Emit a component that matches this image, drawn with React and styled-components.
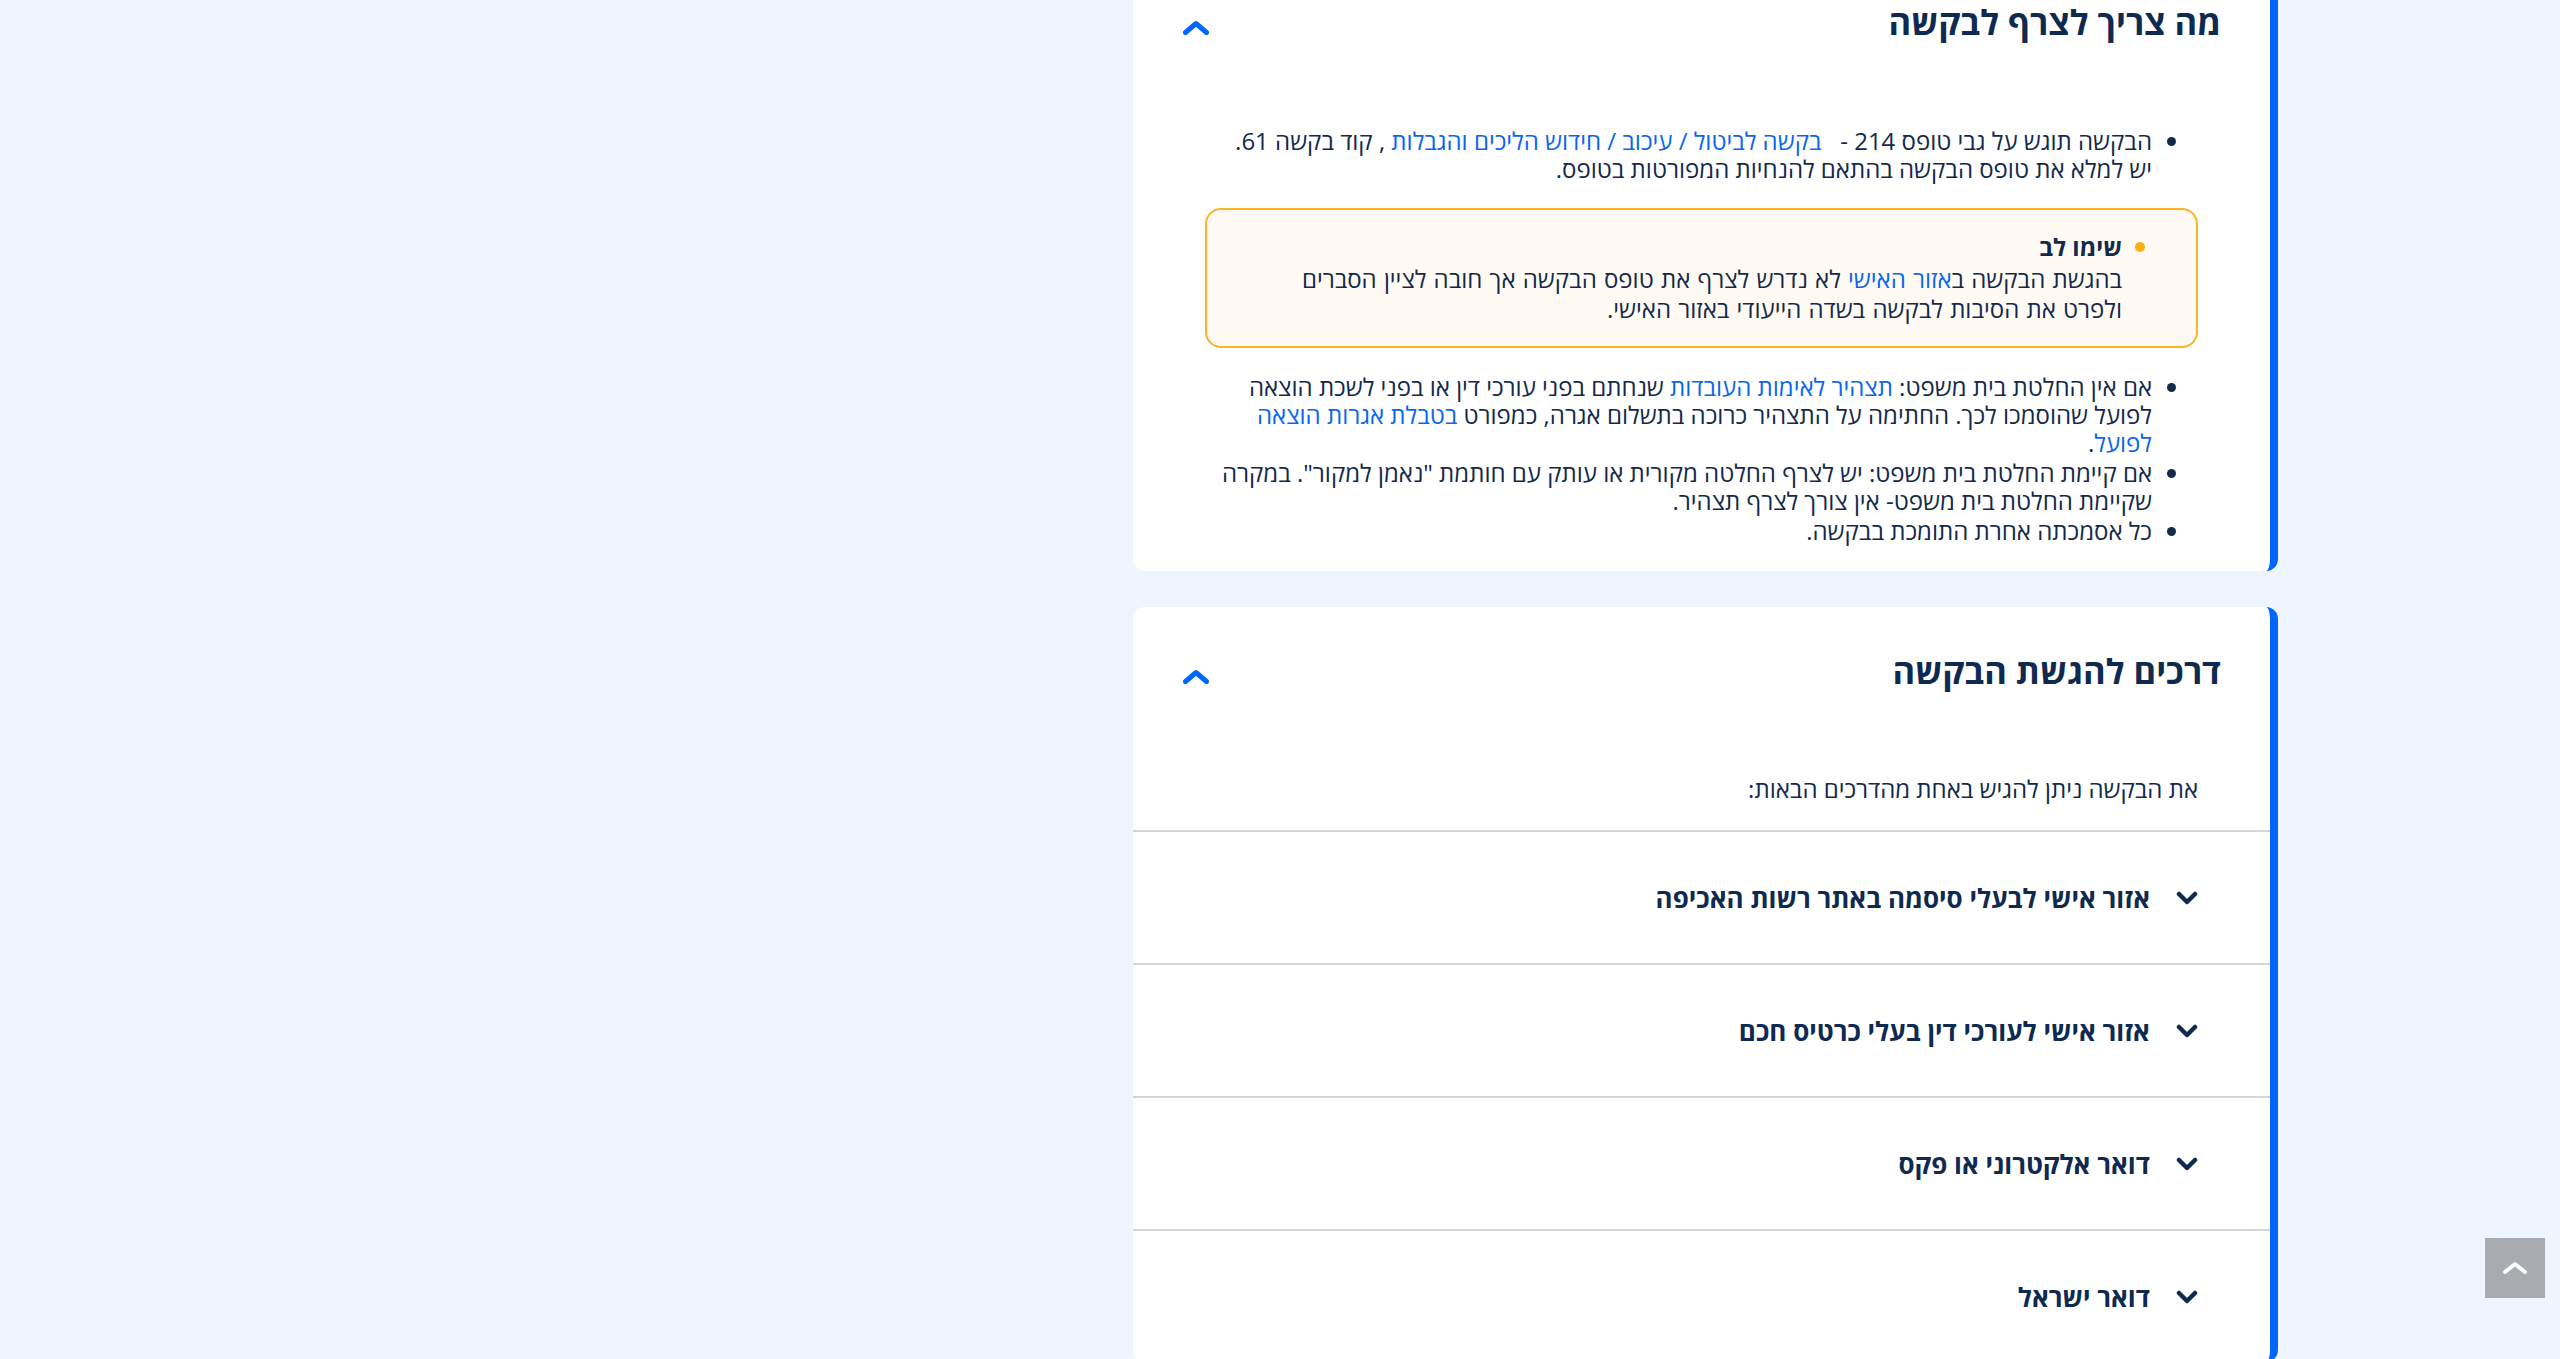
import React from "react";
import styled, { createGlobalStyle } from "styled-components";

const GlobalStyle = createGlobalStyle`
  body {
    margin: 0;
    background: #eef5fe;
    font-family: "Open Sans", "DejaVu Sans", sans-serif;
    color: #13294b;
  }
`;

const Page = styled.main`
  direction: rtl;
  padding: 0 282px 80px 0;
`;

const Column = styled.div`
  width: 1145px;
  margin-top: -42px;
  display: flex;
  flex-direction: column;
  gap: 36px;
`;

const Card = styled.section`
  box-sizing: border-box;
  background: #fff;
  border-right: 8px solid #0066ff;
  border-radius: 12px;
  overflow: hidden;
`;

const Header = styled.div`
  display: flex;
  align-items: center;
  justify-content: space-between;
  padding: 40px 49px;
`;

const Title = styled.h2`
  margin: 0;
  font-size: 34.5px;
  font-weight: 700;
  line-height: 48px;
  color: #0f2a50;
`;

const Toggle = styled.span`
  display: flex;
  margin-top: 12px;
`;

const Body = styled.div`
  padding: ${(p) => (p.$flush ? "40px 0 0" : "41px 72px 24px")};
`;

const List = styled.ul`
  margin: 0;
  padding: 0 46px 0 0;
  font-size: 24px;
  line-height: 28px;

  li {
    margin-bottom: 2px;
  }
`;

const Link = styled.a`
  color: #0a66f0;
  text-decoration: none;
`;

const Note = styled.div`
  margin: 25px 0;
  padding: 22px 51px 22px 70px;
  border: 2px solid #fbb424;
  border-radius: 16px;
  background: #fffbf4;
  font-size: 24px;
  line-height: 30px;
`;

const NoteHead = styled.div`
  display: flex;
  align-items: center;
  gap: 13px;
  margin-bottom: 2px;
  font-weight: 700;

  &::before {
    content: "";
    width: 10px;
    height: 10px;
    border-radius: 50%;
    background: #ffad0d;
  }
`;

const NoteText = styled.p`
  margin: 0 23px 0 0;
  word-spacing: 1px;
`;

const Intro = styled.p`
  margin: 0 0 27px;
  padding: 0 72px;
  font-size: 24px;
  line-height: 28px;
`;

const Row = styled.div`
  height: 131px;
  display: flex;
  align-items: center;
  gap: 26px;
  padding: 0 72px;
  border-top: 2px solid #d6d6d6;
  font-size: 26px;
  font-weight: 700;
  color: #0f2a50;
`;

const ToTop = styled.button`
  position: fixed;
  right: 15px;
  bottom: 61px;
  width: 60px;
  height: 60px;
  border: none;
  background: #a8abaf;
  display: flex;
  align-items: center;
  justify-content: center;
  cursor: pointer;
`;

const ChevronUp = ({ color = "#0066ff", w = 28, h = 16, sw = 5 }) => (
  <svg width={w} height={h} viewBox={`0 0 ${w} ${h}`} fill="none">
    <polyline
      points={`${sw / 2 + 1},${h - sw / 2 - 1} ${w / 2},${sw / 2 + 1} ${w - sw / 2 - 1},${h - sw / 2 - 1}`}
      stroke={color}
      strokeWidth={sw}
      strokeLinecap="round"
      strokeLinejoin="round"
    />
  </svg>
);

const ChevronDown = () => (
  <svg width="22" height="14" viewBox="0 0 22 14" fill="none">
    <polyline
      points="3,3 11,11 19,3"
      stroke="#0f2a50"
      strokeWidth="4.5"
      strokeLinecap="round"
      strokeLinejoin="round"
    />
  </svg>
);

const ways = [
  "אזור אישי לבעלי סיסמה באתר רשות האכיפה",
  "אזור אישי לעורכי דין בעלי כרטיס חכם",
  "דואר אלקטרוני או פקס",
  "דואר ישראל",
];

export default function App() {
  return (
    <>
      <GlobalStyle />
      <Page>
        <Column>
          <Card>
            <Header>
              <Title>מה צריך לצרף לבקשה</Title>
              <Toggle>
                <ChevronUp />
              </Toggle>
            </Header>
            <Body>
              <List>
                <li>
                  הבקשה תוגש על גבי טופס 214 -{"\u00a0\u00a0\u00a0"}
                  <Link href="#">בקשה לביטול / עיכוב / חידוש הליכים והגבלות</Link> , קוד בקשה 61.
                  <br />
                  יש למלא את טופס הבקשה בהתאם להנחיות המפורטות בטופס.
                </li>
              </List>
              <Note>
                <NoteHead>שימו לב</NoteHead>
                <NoteText>
                  בהגשת הבקשה ב<Link href="#">אזור האישי</Link> לא נדרש לצרף את טופס הבקשה אך חובה לציין
                  הסברים ולפרט את הסיבות לבקשה בשדה הייעודי באזור האישי.
                </NoteText>
              </Note>
              <List>
                <li>
                  אם אין החלטת בית משפט: <Link href="#">תצהיר לאימות העובדות</Link> שנחתם בפני עורכי דין
                  או בפני לשכת הוצאה לפועל שהוסמכו לכך. החתימה על התצהיר כרוכה בתשלום אגרה, כמפורט{" "}
                  <Link href="#">בטבלת אגרות הוצאה לפועל</Link>.
                </li>
                <li>
                  אם קיימת החלטת בית משפט: יש לצרף החלטה מקורית או עותק עם חותמת "נאמן למקור". במקרה
                  שקיימת החלטת בית משפט- אין צורך לצרף תצהיר.
                </li>
                <li>כל אסמכתה אחרת התומכת בבקשה.</li>
              </List>
            </Body>
          </Card>

          <Card>
            <Header>
              <Title>דרכים להגשת הבקשה</Title>
              <Toggle>
                <ChevronUp />
              </Toggle>
            </Header>
            <Body $flush>
              <Intro>את הבקשה ניתן להגיש באחת מהדרכים הבאות:</Intro>
              {ways.map((w) => (
                <Row key={w}>
                  <ChevronDown />
                  {w}
                </Row>
              ))}
            </Body>
          </Card>
        </Column>
      </Page>
      <ToTop aria-label="חזרה למעלה">
        <ChevronUp color="#fff" w={26} h={14} sw={4} />
      </ToTop>
    </>
  );
}
